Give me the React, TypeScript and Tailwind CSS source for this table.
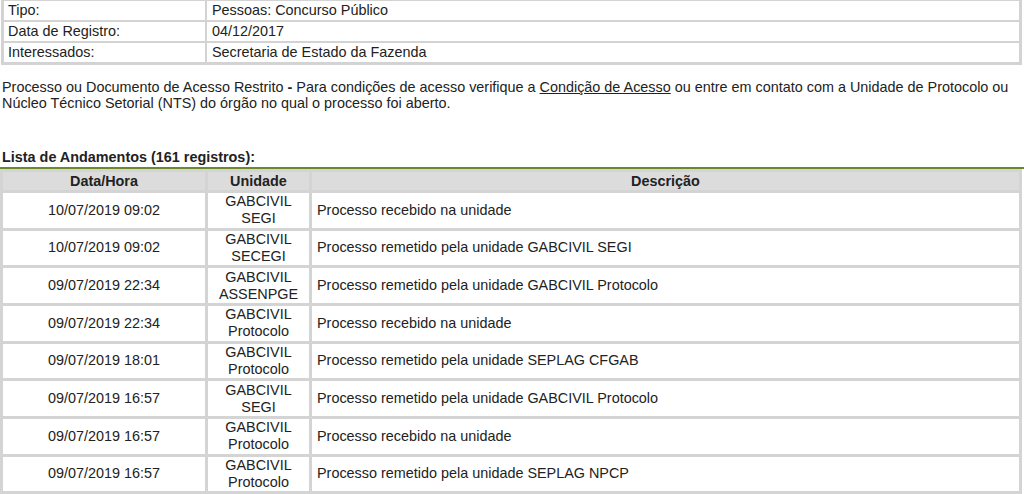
import React from "react";

const info = [
  ["Tipo:", "Pessoas: Concurso Público"],
  ["Data de Registro:", "04/12/2017"],
  ["Interessados:", "Secretaria de Estado da Fazenda"],
];

const rows: [string, string, string, string][] = [
  ["10/07/2019 09:02", "GABCIVIL", "SEGI", "Processo recebido na unidade"],
  ["10/07/2019 09:02", "GABCIVIL", "SECEGI", "Processo remetido pela unidade GABCIVIL SEGI"],
  ["09/07/2019 22:34", "GABCIVIL", "ASSENPGE", "Processo remetido pela unidade GABCIVIL Protocolo"],
  ["09/07/2019 22:34", "GABCIVIL", "Protocolo", "Processo recebido na unidade"],
  ["09/07/2019 18:01", "GABCIVIL", "Protocolo", "Processo remetido pela unidade SEPLAG CFGAB"],
  ["09/07/2019 16:57", "GABCIVIL", "SEGI", "Processo remetido pela unidade GABCIVIL Protocolo"],
  ["09/07/2019 16:57", "GABCIVIL", "Protocolo", "Processo recebido na unidade"],
  ["09/07/2019 16:57", "GABCIVIL", "Protocolo", "Processo remetido pela unidade SEPLAG NPCP"],
  ["09/07/2019 16:50", "GABCIVIL", "Protocolo", "Processo recebido na unidade"],
];

export default function App() {
  return (
    <div
      className="w-[1024px] h-[494px] overflow-hidden bg-white text-[14.4px] text-[#222]"
      style={{ fontFamily: '"Liberation Sans", Arial, sans-serif' }}
    >
      <table className="mt-[-2px] ml-[1px] w-[1021px] border-separate border-spacing-[2px] border border-[#d3d3d3] bg-[#d3d3d3]">
        <tbody>
          {info.map(([k, v]) => (
            <tr key={k}>
              <td className="w-[201px] h-[19px] p-0 pl-[4px] leading-[19px] bg-white align-middle">{k}</td>
              <td className="h-[19px] p-0 pl-[5px] leading-[19px] bg-white align-middle">{v}</td>
            </tr>
          ))}
        </tbody>
      </table>

      <p className="mt-[14px] px-[2px] leading-[16px]">
        Processo ou Documento de Acesso Restrito <b>-</b> Para condições de acesso verifique a{" "}
        <span className="underline">Condição de Acesso</span> ou entre em contato com a Unidade de Protocolo ou
        Núcleo Técnico Setorial (NTS) do órgão no qual o processo foi aberto.
      </p>

      <div className="mt-[38px] px-[2px] font-bold leading-[16px]">Lista de Andamentos (161 registros):</div>
      <div className="mt-[2px] h-[2px] bg-[#6a8a2a]" />

      <table className="w-[1022px] border-separate border-spacing-[3px] bg-[#d4d4d4]">
        <thead>
          <tr>
            <th className="w-[202px] h-[18px] p-0 leading-[18px] bg-[#dcdcdc] font-bold text-center">Data/Hora</th>
            <th className="w-[101px] h-[18px] p-0 leading-[18px] bg-[#dcdcdc] font-bold text-center">Unidade</th>
            <th className="h-[18px] p-0 leading-[18px] bg-[#dcdcdc] font-bold text-center">Descrição</th>
          </tr>
        </thead>
        <tbody>
          {rows.map(([d, u1, u2, desc], i) => (
            <tr key={i}>
              <td className="h-[34.67px] p-0 leading-[17px] bg-white text-center align-middle">{d}</td>
              <td className="h-[34.67px] p-0 leading-[17px] bg-white text-center align-middle">
                {u1}
                <br />
                {u2}
              </td>
              <td className="h-[34.67px] p-0 pl-[5px] leading-[17px] bg-white align-middle">{desc}</td>
            </tr>
          ))}
        </tbody>
      </table>
    </div>
  );
}
